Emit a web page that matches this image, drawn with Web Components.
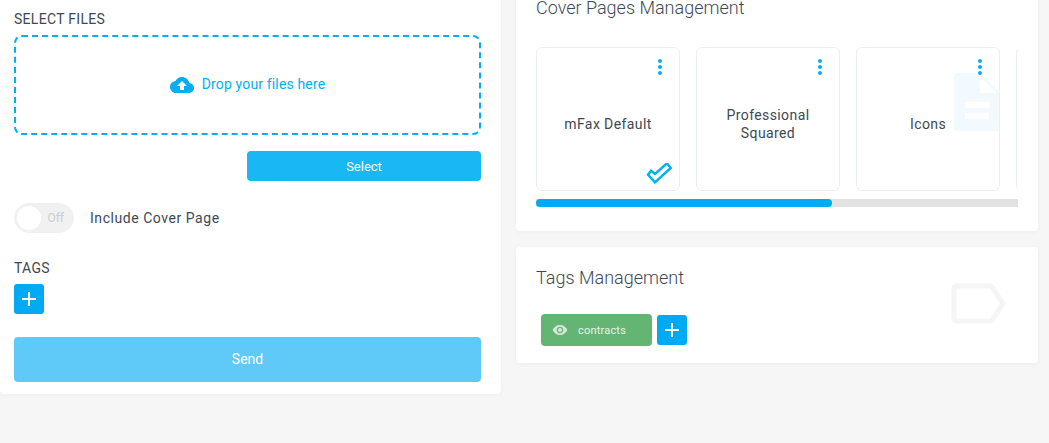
<!DOCTYPE html>
<html>
<head>
<meta charset="utf-8">
<title>Send fax</title>
<style>
    html, body { margin: 0; height: 443px; overflow: hidden; background: #f6f6f6; }
    body { font-family: Roboto, "Liberation Sans", sans-serif; color: #3e4855; }
</style>
</head>
<body>
<fax-page></fax-page>

<script>
"use strict";

const define = (name, css, html) => {
    customElements.define(name, class extends HTMLElement {
        constructor() {
            super();
            this.attachShadow({ mode: 'open' }).innerHTML = `<style>${css}</style>${html}`;
        }
    });
};

const PLUS = `<svg width="14" height="14" viewBox="0 0 14 14"><path d="M7 0v14M0 7h14" stroke="#fff" stroke-width="2" fill="none"/></svg>`;

define('app-card', `
    :host { display: block; position: relative; background: #fff; border-radius: 4px; box-shadow: 0 1px 4px rgba(0,0,0,.04); overflow: hidden; box-sizing: border-box; }
`, `<slot></slot>`);

define('field-label', `
    :host { display: block; font-size: 14px; line-height: 16px; color: #3e4855; letter-spacing: .3px; }
`, `<slot></slot>`);

define('card-title', `
    :host { display: block; font-size: 18px; font-weight: 300; line-height: 22px; color: #3e4855; }
`, `<slot></slot>`);

define('drop-zone', `
    :host { display: flex; align-items: center; justify-content: center; gap: 8px; box-sizing: border-box; height: 100px; padding-bottom: 2px; border: 2px dashed #03aef2; border-radius: 8px; color: #03aef2; font-size: 14px; letter-spacing: .15px; }
    svg { display: block; fill: #03aef2; margin-top: 2px; }
`, `<svg width="24" height="24" viewBox="0 0 24 24"><path d="M19.35 10.04C18.67 6.59 15.64 4 12 4 9.11 4 6.6 5.64 5.35 8.04 2.34 8.36 0 10.91 0 14c0 3.31 2.69 6 6 6h13c2.76 0 5-2.24 5-5 0-2.64-2.05-4.78-4.65-4.96zM14 13v4h-4v-4H7l5-5 5 5h-3z"/></svg><slot></slot>`);

define('action-button', `
    :host { display: flex; align-items: center; justify-content: center; box-sizing: border-box; border-radius: 4px; color: #fff; background: var(--btn-bg, #1ab7f5); height: var(--btn-h, 30px); padding-bottom: var(--btn-pb, 0); font-size: var(--btn-fs, 13px); }
`, `<slot></slot>`);

define('plus-button', `
    :host { display: flex; align-items: center; justify-content: center; width: 30px; height: 30px; border-radius: 3px; background: #00aaf2; flex: none; }
    svg { display: block; }
`, PLUS);

define('toggle-switch', `
    :host { display: flex; align-items: center; gap: 16px; font-size: 14px; letter-spacing: .55px; color: #3e4855; }
    .track { position: relative; box-sizing: border-box; width: 60px; height: 30px; border-radius: 15px; border: 1px solid #eef1f4; background: #f1f1f2; }
    .knob { position: absolute; left: 2px; top: 2px; width: 24px; height: 24px; border-radius: 50%; background: #fff; }
    .off { position: absolute; right: 9px; top: 0; line-height: 28px; font-size: 12px; letter-spacing: 0; color: #cbcdcf; }
`, `<div class="track"><div class="knob"></div><div class="off">Off</div></div><slot></slot>`);

define('cover-card', `
    :host { display: flex; align-items: center; justify-content: center; position: relative; overflow: hidden; flex: none; box-sizing: border-box; width: 144px; height: 144px; padding: 10px 20px 0; border: 1px solid #e9eef4; border-radius: 6px; background: #fff; text-align: center; font-size: 14px; line-height: 18px; letter-spacing: .4px; color: #3e4855; }
    .menu { position: absolute; right: 17px; top: 11px; display: grid; gap: 2px; }
    .menu i { display: block; width: 4px; height: 4px; border-radius: 50%; background: #03aef2; }
`, `<slot></slot><div class="menu"><i></i><i></i><i></i></div>`);

define('tag-chip', `
    :host { display: flex; align-items: center; box-sizing: border-box; width: 111px; height: 32px; padding-left: 11px; gap: 10px; border-radius: 4px; background: #64b573; color: #e6f3e8; font-size: 11px; letter-spacing: .2px; flex: none; }
    svg { display: block; fill: #d5e9d8; }
`, `<svg width="16" height="16" viewBox="0 0 24 24"><path d="M12 4.5C7 4.5 2.730 7.610 1 12c1.730 4.390 6 7.500 11 7.500s9.270-3.110 11-7.500c-1.730-4.390-6-7.500-11-7.500zM12 17c-2.760 0-5-2.240-5-5s2.240-5 5-5 5 2.240 5 5-2.240 5-5 5zm0-8c-1.660 0-3 1.340-3 3s1.340 3 3 3 3-1.340 3-3-1.340-3-3-3z"/></svg><slot></slot>`);

define('send-form', `
    :host { display: block; padding: 41px 20px 12px 14px; }
    .dz { margin-top: 8px; }
    .sel { display: flex; justify-content: flex-end; margin-top: 16px; }
    .sel action-button { width: 234px; }
    toggle-switch { margin-top: 22px; }
    .tags { margin-top: 27px; }
    plus-button { margin-top: 8px; }
    .send { margin-top: 23px; --btn-bg: #5fc9f8; --btn-h: 45px; --btn-fs: 14px; --btn-pb: 2px; }
`, `
    <field-label>SELECT FILES</field-label>
    <drop-zone class="dz">Drop your files here</drop-zone>
    <div class="sel"><action-button>Select</action-button></div>
    <toggle-switch>Include Cover Page</toggle-switch>
    <field-label class="tags">TAGS</field-label>
    <plus-button></plus-button>
    <action-button class="send">Send</action-button>
`);

define('cover-pages', `
    :host { display: block; padding: 31px 20px 24px; }
    card-title { line-height: 14px; }
    .scroller { display: flex; gap: 16px; margin-top: 32px; overflow: hidden; }
    .track { height: 8px; margin-top: 8px; background: #e2e2e2; }
    .thumb { width: 296px; height: 8px; border-radius: 4px; background: #00aaf2; }
`, `
    <card-title>Cover Pages Management</card-title>
    <div class="scroller">
        <cover-card>mFax Default
            <svg width="26" height="22" viewBox="0 0 26 22" style="position:absolute;right:7px;bottom:5px"><path d="M2 11.7L9 19.3 24.7 5 21 .3 9 11 5 7.7z" fill="none" stroke="#03aef2" stroke-width="2.4"/></svg>
        </cover-card>
        <cover-card>Professional Squared</cover-card>
        <cover-card>Icons
            <svg width="45" height="58" viewBox="0 0 45 58" style="position:absolute;right:0;top:25px"><path d="M4 0H26L48 22V54a4 4 0 0 1-4 4H4a4 4 0 0 1-4-4V4a4 4 0 0 1 4-4z" fill="#f2faff"/><path d="M26 4V20H43zM11 29H35V35H11zM11 40H35V46H11z" fill="#fff"/></svg>
        </cover-card>
        <cover-card></cover-card>
    </div>
    <div class="track"><div class="thumb"></div></div>
`);

define('tags-panel', `
    :host { display: block; position: relative; box-sizing: border-box; height: 116px; padding: 20px 20px 0; }
    .row { display: flex; align-items: center; gap: 5px; margin-top: 25px; margin-left: 5px; }
    svg.mark { position: absolute; left: 435px; top: 36px; }
`, `
    <card-title>Tags Management</card-title>
    <svg class="mark" width="56" height="41" viewBox="0 0 56 41"><path d="M6 3H39a3 3 0 0 1 2.500 1.300L52 20.500 41.500 36.700A3 3 0 0 1 39 38H6a3 3 0 0 1-3-3V6a3 3 0 0 1 3-3z" fill="none" stroke="#f5f5f5" stroke-width="5"/></svg>
    <div class="row"><tag-chip>contracts</tag-chip><plus-button></plus-button></div>
`);

define('fax-page', `
    :host { display: grid; grid-template-columns: 501px 522px; column-gap: 15px; align-items: start; margin-top: -30px; }
    .right { display: grid; gap: 16px; }
`, `
    <app-card><send-form></send-form></app-card>
    <div class="right">
        <app-card><cover-pages></cover-pages></app-card>
        <app-card><tags-panel></tags-panel></app-card>
    </div>
`);
</script>
</body>
</html>
